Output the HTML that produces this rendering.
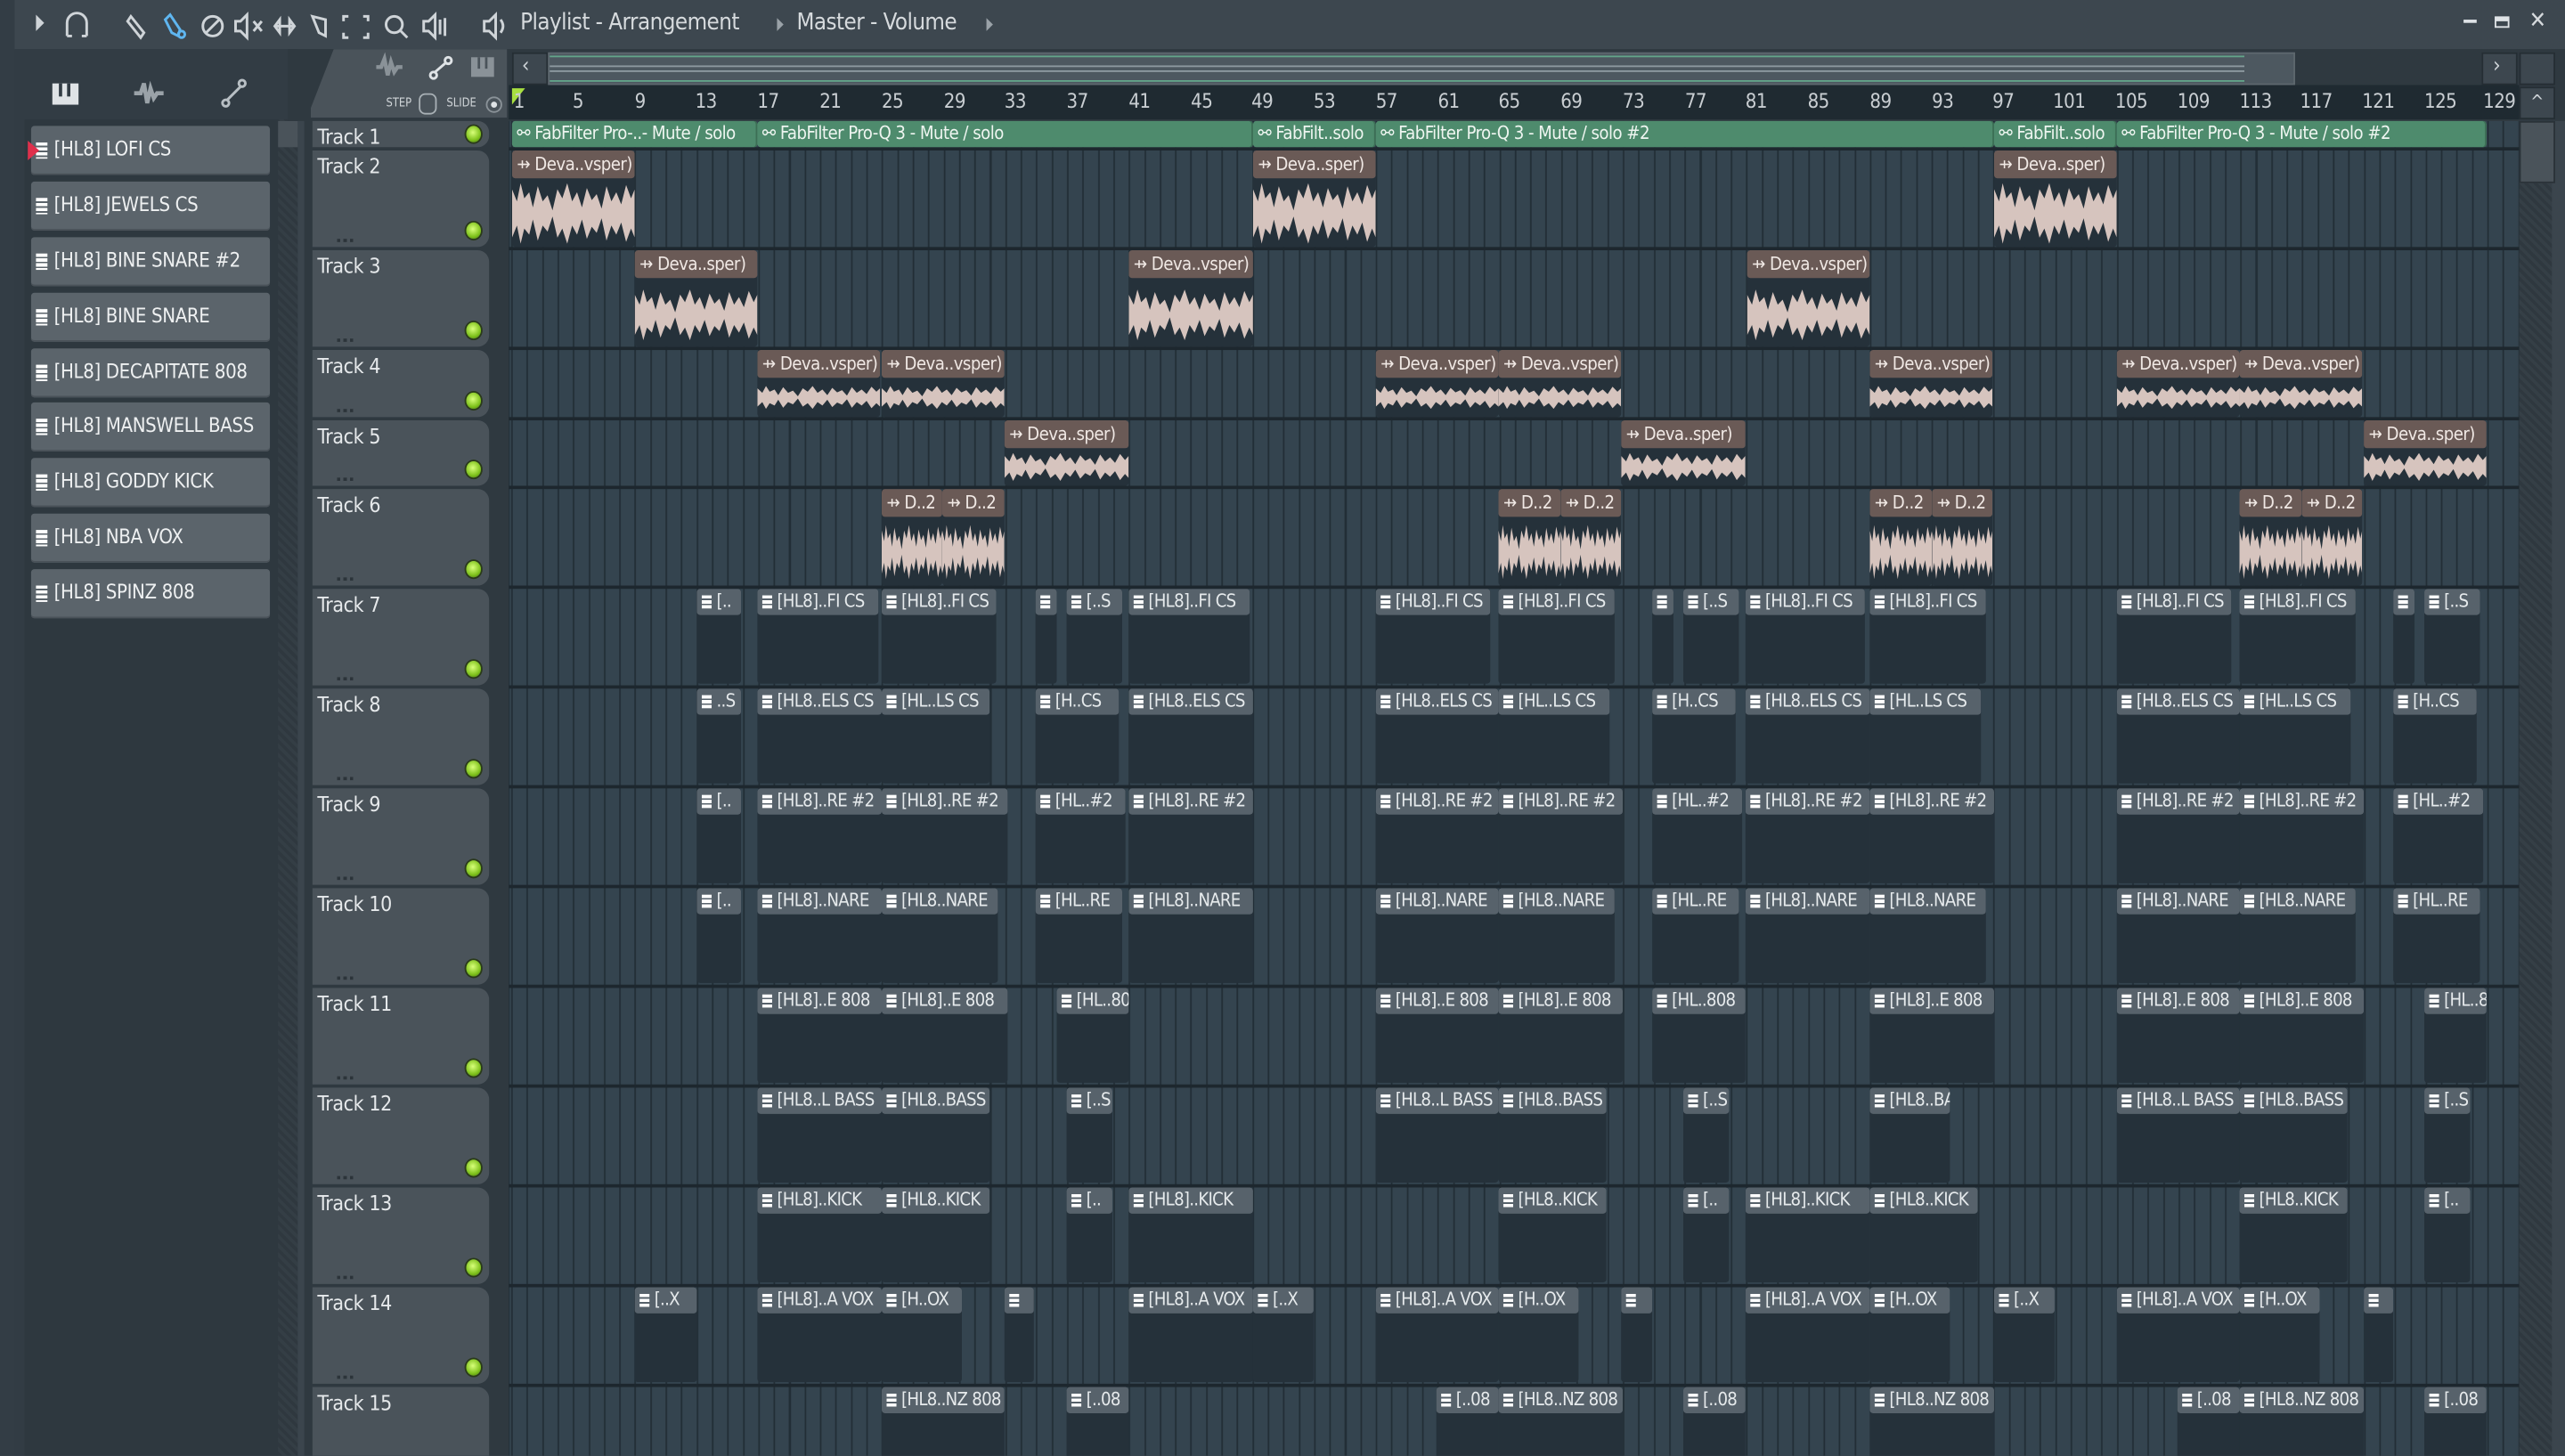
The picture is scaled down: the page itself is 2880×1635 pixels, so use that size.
<!DOCTYPE html>
<html><head><meta charset="utf-8"><style>
html,body{margin:0;padding:0;background:#3b454d;overflow:hidden;width:2880px;height:1634px}
#r{position:absolute;left:0;top:0;width:1568px;height:890px;overflow:hidden;transform:scale(1.836735);transform-origin:0 0;background:#3b454d;font-family:"DejaVu Sans Condensed","DejaVu Sans","Liberation Sans",sans-serif;color:#dfe3e6}
.ab{position:absolute}
#top{left:0;top:0;width:1568px;height:30px;background:#3d474f}
.tt{position:absolute;top:6px;font-size:14px;color:#d6dadd;letter-spacing:-.3px}
#lp{left:9px;top:30px;width:173px;height:860px;background:#323c44}
.ch{position:absolute;left:19px;width:146px;height:30px;background:#5b646b;border-radius:2px;box-shadow:inset 0 -1px 0 #4a5259}
.ch span{position:absolute;left:14px;top:7px;font-size:12px;color:#eef0f1;white-space:nowrap;letter-spacing:-.2px}
.ch i{position:absolute;left:3px;top:10px;width:7px;height:10px;background:repeating-linear-gradient(#fff 0 2px,#5b646b 2px 3px)}
#hdrcol{left:186px;top:74px;width:125px;height:816px;background:#2f3940}
.th{position:absolute;left:191px;width:108px;background:#4a535a;border-radius:0 7px 7px 0}
.th span{position:absolute;left:3px;top:2px;font-size:12.5px;color:#e6e9eb;letter-spacing:-.2px}
.th i{position:absolute;right:5px;bottom:5px;width:9px;height:10px;border-radius:50%;background:radial-gradient(circle at 45% 40%,#d8ff7a,#7fc21c 60%,#3f6a10);box-shadow:0 0 0 1px #2a3a1a}
.th u{position:absolute;left:15px;bottom:3px;width:10px;height:2px;background:repeating-linear-gradient(90deg,#2c343a 0 2px,transparent 2px 4px)}
#grid{left:311px;top:74px;width:1229px;height:816px;background-color:#34444f;background-image:repeating-linear-gradient(90deg,#222e36 0 1px,transparent 1px 9.4375px);background-position:1.5px 0}
.sep{position:absolute;left:311px;width:1229px;height:2px;background:#1d272e}
#ruler{left:311px;top:52px;width:1229px;height:21px;background:#1f2a31}
.rn{position:absolute;top:55px;font-size:12px;color:#c9ced2;letter-spacing:-.3px}
.p{position:absolute;height:58px;background:#25313a;border-radius:2px;overflow:hidden}
.p b{display:block;height:16px;background:#57626b;border-radius:2px;font-weight:normal;font-size:11px;letter-spacing:-.4px;line-height:16px;white-space:nowrap;overflow:hidden;color:#e6eaec;padding-left:12px;position:relative}
.p b:before{content:"";position:absolute;left:3px;top:4px;width:6px;height:8px;background:repeating-linear-gradient(#fff 0 2px,#57626b 2px 3px)}
.a{position:absolute;background:#25313a;border-radius:2px;overflow:hidden}
.a b{display:block;height:17px;background:#6a5a56;border-radius:2px;font-weight:normal;font-size:11px;letter-spacing:-.3px;line-height:17px;white-space:nowrap;overflow:hidden;color:#f0e8e4;padding-left:3px}
.a em{position:absolute;left:0;right:0;background:#d6c4be;clip-path:polygon(0 10%,4% 30%,7% 0,10% 25%,14% 15%,17% 40%,21% 5%,25% 30%,29% 20%,33% 45%,37% 10%,41% 25%,45% 0,49% 30%,53% 15%,57% 40%,61% 8%,65% 28%,69% 18%,73% 42%,77% 5%,81% 30%,85% 15%,89% 35%,93% 3%,97% 25%,100% 10%,100% 90%,97% 75%,93% 97%,89% 65%,85% 85%,81% 70%,77% 95%,73% 58%,69% 82%,65% 72%,61% 92%,57% 60%,53% 85%,49% 70%,45% 100%,41% 75%,37% 90%,33% 55%,29% 80%,25% 70%,21% 95%,17% 60%,14% 85%,10% 75%,7% 100%,4% 70%,0 90%)}
.au{position:absolute;top:74px;height:16px;background:#4e8b6d;border-radius:2px;font-size:11px;letter-spacing:-.3px;line-height:16px;color:#eef5f0;white-space:nowrap;overflow:hidden;padding-left:3px;box-shadow:inset -1px 0 0 #3c6e55}
</style></head><body><div id="r">
<div class="ab" id="top"></div>
<div class="ab" style="left:0;top:0;width:9px;height:890px;background:#333d45"></div>
<div class="ab" style="left:22px;top:9px;width:0;height:0;border-left:5px solid #cfd4d8;border-top:5px solid transparent;border-bottom:5px solid transparent"></div>
<svg class="ab" style="left:38px;top:6px" width="240" height="20" viewBox="0 0 240 20" fill="none" stroke="#cfd4d8" stroke-width="1.6">
<path d="M3 16V8a6 6 0 0 1 12 0v8M3 16h3M12 16h3"/>
<path d="M42 4l8 10-2 3-8-10z"/>
<path d="M66 3l6 9-1 4-4-2-4-8z" stroke="#5fb6f0"/><circle cx="73" cy="15" r="2" stroke="#5fb6f0"/>
<circle cx="92" cy="10" r="6"/><path d="M88 14l8-8"/>
<path d="M106 7h3l4-4v14l-4-4h-3zM117 7l5 6M122 7l-5 6"/>
<path d="M130 10h12M130 10l3-4v8zM142 10l-3-4v8z"/>
<path d="M153 4l8 2v10l-4-2z"/>
<path d="M175 4h-3v3M184 4h3v3M175 17h-3v-3M184 17h3v-3"/>
<circle cx="203" cy="9" r="5"/><path d="M207 13l4 4"/>
<path d="M221 7h3l4-4v14l-4-4h-3zM231 6v9M234 5v11"/>
</svg>
<svg class="ab" style="left:293px;top:6px" width="20" height="20" viewBox="0 0 20 20" fill="none" stroke="#cfd4d8" stroke-width="1.6"><path d="M3 7h3l4-4v14l-4-4H3zM13 6q3 4 0 8"/></svg>
<div class="tt" style="left:318px">Playlist - Arrangement</div>
<div class="ab" style="left:475px;top:11px;border-left:4px solid #9aa2a8;border-top:4px solid transparent;border-bottom:4px solid transparent"></div>
<div class="tt" style="left:487px">Master - Volume</div>
<div class="ab" style="left:603px;top:11px;border-left:4px solid #9aa2a8;border-top:4px solid transparent;border-bottom:4px solid transparent"></div>
<div class="ab" style="left:1506px;top:12px;width:8px;height:2px;background:#dfe3e6"></div>
<div class="ab" style="left:1525px;top:10px;width:9px;height:7px;border:1.5px solid #dfe3e6;border-top-width:3px;box-sizing:border-box"></div>
<div class="tt" style="left:1546px;top:5px;font-size:14px">✕</div>

<div class="ab" id="lp"></div>
<svg class="ab" style="left:30px;top:46px" width="130" height="22" viewBox="0 0 130 22" fill="#dfe3e6" stroke="#b8bfc4" stroke-width="1.6">
<rect x="2" y="5" width="16" height="13" stroke="none"/><rect x="6" y="5" width="2" height="8" fill="#323c44" stroke="none"/><rect x="11" y="5" width="2" height="8" fill="#323c44" stroke="none"/>
<path d="M52 11h4l2-6 2 12 2-9 2 6 2-3h4" fill="none" stroke="#9aa2a8" stroke-width="2.5"/>
<circle cx="108" cy="17" r="2" fill="none"/><circle cx="118" cy="5" r="2" fill="none"/><path d="M109 15l8-8" fill="none"/>
</svg>
<div class="ab" style="left:15px;top:73px;width:155px;height:817px;background:#2e383f"></div>
<div class="ab" style="left:170px;top:73px;width:12px;height:817px;background:repeating-linear-gradient(45deg,#2f383f 0 2px,#343e45 2px 4px)"></div>
<div class="ab" style="left:170px;top:74px;width:12px;height:16px;background:#4a535a"></div>
<div class="ch" style="top:77px"><i></i><span>[HL8] LOFI CS</span></div>
<div class="ab" style="left:17px;top:86px;border-left:7px solid #e0304c;border-top:6px solid transparent;border-bottom:6px solid transparent"></div>
<div class="ch" style="top:111px"><i></i><span>[HL8] JEWELS CS</span></div>
<div class="ch" style="top:145px"><i></i><span>[HL8] BINE SNARE #2</span></div>
<div class="ch" style="top:179px"><i></i><span>[HL8] BINE SNARE</span></div>
<div class="ch" style="top:213px"><i></i><span>[HL8] DECAPITATE 808</span></div>
<div class="ch" style="top:246px"><i></i><span>[HL8] MANSWELL BASS</span></div>
<div class="ch" style="top:280px"><i></i><span>[HL8] GODDY KICK</span></div>
<div class="ch" style="top:314px"><i></i><span>[HL8] NBA VOX</span></div>
<div class="ch" style="top:348px"><i></i><span>[HL8] SPINZ 808</span></div>

<div class="ab" style="left:176px;top:30px;width:1392px;height:44px;background:#2f3940"></div>
<div class="ab" style="left:190px;top:30px;width:120px;height:42px;background:#4a535a;clip-path:polygon(14px 0,120px 0,120px 42px,0 42px,0 36px)"></div>
<svg class="ab" style="left:228px;top:32px" width="80" height="18" viewBox="0 0 80 18" fill="none" stroke-width="1.6">
<path d="M2 9h3l2-5 2 10 2-8 2 6 2-3h3" stroke="#8a9298" stroke-width="2.4"/>
<circle cx="37" cy="14" r="2" stroke="#dfe3e6"/><circle cx="46" cy="5" r="2" stroke="#dfe3e6"/><path d="M38 12l7-6" stroke="#dfe3e6"/>
<rect x="60" y="3" width="14" height="12" fill="#8a9298" stroke="none"/><rect x="64" y="3" width="1.5" height="7" fill="#4a535a"/><rect x="68.5" y="3" width="1.5" height="7" fill="#4a535a"/>
</svg>
<div class="ab" style="left:236px;top:59px;font-size:7px;color:#d0d5d8">STEP</div>
<div class="ab" style="left:256px;top:57px;width:9px;height:11px;border:1px solid #a8b0b5;border-radius:4px"></div>
<div class="ab" style="left:273px;top:59px;font-size:7px;color:#d0d5d8">SLIDE</div>
<div class="ab" style="left:297px;top:59px;width:8px;height:8px;border:1px solid #8a9298;border-radius:50%;background:radial-gradient(#dfe3e6 30%,transparent 35%)"></div>
<div class="ab" style="left:313px;top:32px;width:20px;height:18px;background:#3d474f;border:1px solid #252e34"></div>
<div class="ab" style="left:319px;top:33px;font-size:13px;color:#cfd4d8">&lsaquo;</div>
<div class="ab" style="left:335px;top:32px;width:1066px;height:18px;background:#4d5860;border:1px solid #5d676e;background-image:linear-gradient(#63a58a,#63a58a),linear-gradient(#8d9aa1,#8d9aa1),linear-gradient(#8d9aa1,#8d9aa1),linear-gradient(#63a58a,#63a58a);background-size:1036px 1px,1036px 1px,1036px 1px,1036px 1px;background-position:0 1px,0 7px,0 10px,0 16px;background-repeat:no-repeat"></div>
<div class="ab" style="left:1517px;top:32px;width:20px;height:18px;background:#3d474f;border:1px solid #252e34"></div>
<div class="ab" style="left:1524px;top:33px;font-size:13px;color:#cfd4d8">&rsaquo;</div>
<div class="ab" style="left:1540px;top:32px;width:20px;height:18px;background:#3d474f;border:1px solid #252e34"></div>
<div class="ab" id="ruler"></div>
<div class="ab" style="left:313px;top:54px;width:0;height:0;border-left:8px solid #a8e040;border-bottom:10px solid transparent"></div>
<div class="rn" style="left:314px">1</div><div class="rn" style="left:350px">5</div><div class="rn" style="left:388px">9</div><div class="rn" style="left:425px">13</div><div class="rn" style="left:463px">17</div><div class="rn" style="left:501px">21</div><div class="rn" style="left:539px">25</div><div class="rn" style="left:577px">29</div><div class="rn" style="left:614px">33</div><div class="rn" style="left:652px">37</div><div class="rn" style="left:690px">41</div><div class="rn" style="left:728px">45</div><div class="rn" style="left:765px">49</div><div class="rn" style="left:803px">53</div><div class="rn" style="left:841px">57</div><div class="rn" style="left:879px">61</div><div class="rn" style="left:916px">65</div><div class="rn" style="left:954px">69</div><div class="rn" style="left:992px">73</div><div class="rn" style="left:1030px">77</div><div class="rn" style="left:1067px">81</div><div class="rn" style="left:1105px">85</div><div class="rn" style="left:1143px">89</div><div class="rn" style="left:1181px">93</div><div class="rn" style="left:1218px">97</div><div class="rn" style="left:1255px">101</div><div class="rn" style="left:1293px">105</div><div class="rn" style="left:1331px">109</div><div class="rn" style="left:1369px">113</div><div class="rn" style="left:1406px">117</div><div class="rn" style="left:1444px">121</div><div class="rn" style="left:1482px">125</div><div class="rn" style="left:1518px">129</div>
<div class="ab" style="left:1540px;top:53px;width:20px;height:18px;background:#3d474f;border:1px solid #252e34;font-size:11px;color:#cfd4d8;text-align:center;line-height:18px">^</div>
<div class="ab" style="left:1540px;top:74px;width:20px;height:816px;background:repeating-linear-gradient(45deg,#2f383f 0 2px,#353f46 2px 4px)"></div>
<div class="ab" style="left:1540px;top:74px;width:20px;height:36px;background:#4a535a;border:1px solid #2a3238"></div>

<div class="ab" id="hdrcol"></div>
<div class="th" style="top:74px;height:16px"><span>Track 1</span><i style="bottom:3px"></i></div>
<div class="th" style="top:92px;height:59px"><span>Track 2</span><i></i><u></u></div>
<div class="th" style="top:153px;height:59px"><span>Track 3</span><i></i><u></u></div>
<div class="th" style="top:214px;height:41px"><span>Track 4</span><i></i><u></u></div>
<div class="th" style="top:257px;height:40px"><span>Track 5</span><i></i><u></u></div>
<div class="th" style="top:299px;height:59px"><span>Track 6</span><i></i><u></u></div>
<div class="th" style="top:360px;height:59px"><span>Track 7</span><i></i><u></u></div>
<div class="th" style="top:421px;height:59px"><span>Track 8</span><i></i><u></u></div>
<div class="th" style="top:482px;height:59px"><span>Track 9</span><i></i><u></u></div>
<div class="th" style="top:543px;height:59px"><span>Track 10</span><i></i><u></u></div>
<div class="th" style="top:604px;height:59px"><span>Track 11</span><i></i><u></u></div>
<div class="th" style="top:665px;height:59px"><span>Track 12</span><i></i><u></u></div>
<div class="th" style="top:726px;height:59px"><span>Track 13</span><i></i><u></u></div>
<div class="th" style="top:787px;height:59px"><span>Track 14</span><i></i><u></u></div>
<div class="th" style="top:848px;height:59px"><span>Track 15</span></div>

<div class="ab" id="grid"></div>
<div class="sep" style="top:90px"></div><div class="sep" style="top:151px"></div><div class="sep" style="top:212px"></div><div class="sep" style="top:255px"></div><div class="sep" style="top:297px"></div><div class="sep" style="top:358px"></div><div class="sep" style="top:419px"></div><div class="sep" style="top:480px"></div><div class="sep" style="top:541px"></div><div class="sep" style="top:602px"></div><div class="sep" style="top:663px"></div><div class="sep" style="top:724px"></div><div class="sep" style="top:785px"></div><div class="sep" style="top:846px"></div>

<div class="au" style="left:313px;width:147px">⚯ FabFilter Pro-..- Mute / solo</div>
<div class="au" style="left:463px;width:300px">⚯ FabFilter Pro-Q 3 - Mute / solo</div>
<div class="au" style="left:766px;width:72px">⚯ FabFilt..solo</div>
<div class="au" style="left:841px;width:375px">⚯ FabFilter Pro-Q 3 - Mute / solo #2</div>
<div class="au" style="left:1219px;width:72px">⚯ FabFilt..solo</div>
<div class="au" style="left:1294px;width:223px">⚯ FabFilter Pro-Q 3 - Mute / solo #2</div>

<div class="a" style="left:313px;top:92px;width:75px;height:59px"><b>⇸ Deva..vsper)</b><em style="top:20px;bottom:2px"></em></div>
<div class="a" style="left:766px;top:92px;width:75px;height:59px"><b>⇸ Deva..sper)</b><em style="top:20px;bottom:2px"></em></div>
<div class="a" style="left:1219px;top:92px;width:75px;height:59px"><b>⇸ Deva..sper)</b><em style="top:20px;bottom:2px"></em></div>
<div class="a" style="left:388px;top:153px;width:75px;height:59px"><b>⇸ Deva..sper)</b><em style="top:24px;bottom:4px"></em></div>
<div class="a" style="left:690px;top:153px;width:76px;height:59px"><b>⇸ Deva..vsper)</b><em style="top:24px;bottom:4px"></em></div>
<div class="a" style="left:1068px;top:153px;width:75px;height:59px"><b>⇸ Deva..vsper)</b><em style="top:24px;bottom:4px"></em></div>
<div class="a" style="left:463px;top:214px;width:75px;height:41px"><b>⇸ Deva..vsper)</b><em style="top:22px;bottom:5px"></em></div>
<div class="a" style="left:539px;top:214px;width:75px;height:41px"><b>⇸ Deva..vsper)</b><em style="top:22px;bottom:5px"></em></div>
<div class="a" style="left:841px;top:214px;width:75px;height:41px"><b>⇸ Deva..vsper)</b><em style="top:22px;bottom:5px"></em></div>
<div class="a" style="left:916px;top:214px;width:75px;height:41px"><b>⇸ Deva..vsper)</b><em style="top:22px;bottom:5px"></em></div>
<div class="a" style="left:1143px;top:214px;width:75px;height:41px"><b>⇸ Deva..vsper)</b><em style="top:22px;bottom:5px"></em></div>
<div class="a" style="left:1294px;top:214px;width:75px;height:41px"><b>⇸ Deva..vsper)</b><em style="top:22px;bottom:5px"></em></div>
<div class="a" style="left:1369px;top:214px;width:75px;height:41px"><b>⇸ Deva..vsper)</b><em style="top:22px;bottom:5px"></em></div>
<div class="a" style="left:614px;top:257px;width:76px;height:40px"><b>⇸ Deva..sper)</b><em style="top:20px;bottom:3px"></em></div>
<div class="a" style="left:991px;top:257px;width:76px;height:40px"><b>⇸ Deva..sper)</b><em style="top:20px;bottom:3px"></em></div>
<div class="a" style="left:1445px;top:257px;width:75px;height:40px"><b>⇸ Deva..sper)</b><em style="top:20px;bottom:3px"></em></div>
<div class="a" style="left:539px;top:299px;width:37px;height:59px"><b>⇸ D..2</b><em style="top:22px;bottom:4px"></em></div>
<div class="a" style="left:576px;top:299px;width:38px;height:59px"><b>⇸ D..2</b><em style="top:22px;bottom:4px"></em></div>
<div class="a" style="left:916px;top:299px;width:38px;height:59px"><b>⇸ D..2</b><em style="top:22px;bottom:4px"></em></div>
<div class="a" style="left:954px;top:299px;width:37px;height:59px"><b>⇸ D..2</b><em style="top:22px;bottom:4px"></em></div>
<div class="a" style="left:1143px;top:299px;width:38px;height:59px"><b>⇸ D..2</b><em style="top:22px;bottom:4px"></em></div>
<div class="a" style="left:1181px;top:299px;width:37px;height:59px"><b>⇸ D..2</b><em style="top:22px;bottom:4px"></em></div>
<div class="a" style="left:1369px;top:299px;width:38px;height:59px"><b>⇸ D..2</b><em style="top:22px;bottom:4px"></em></div>
<div class="a" style="left:1407px;top:299px;width:37px;height:59px"><b>⇸ D..2</b><em style="top:22px;bottom:4px"></em></div>

<div class="p" style="left:426px;top:360px;width:27px"><b>[..</b></div>
<div class="p" style="left:463px;top:360px;width:74px"><b>[HL8]..FI CS</b></div>
<div class="p" style="left:539px;top:360px;width:70px"><b>[HL8]..FI CS</b></div>
<div class="p" style="left:633px;top:360px;width:13px"><b></b></div>
<div class="p" style="left:652px;top:360px;width:34px"><b>[..S</b></div>
<div class="p" style="left:690px;top:360px;width:74px"><b>[HL8]..FI CS</b></div>
<div class="p" style="left:841px;top:360px;width:70px"><b>[HL8]..FI CS</b></div>
<div class="p" style="left:916px;top:360px;width:71px"><b>[HL8]..FI CS</b></div>
<div class="p" style="left:1010px;top:360px;width:13px"><b></b></div>
<div class="p" style="left:1029px;top:360px;width:34px"><b>[..S</b></div>
<div class="p" style="left:1067px;top:360px;width:73px"><b>[HL8]..FI CS</b></div>
<div class="p" style="left:1143px;top:360px;width:71px"><b>[HL8]..FI CS</b></div>
<div class="p" style="left:1294px;top:360px;width:70px"><b>[HL8]..FI CS</b></div>
<div class="p" style="left:1369px;top:360px;width:71px"><b>[HL8]..FI CS</b></div>
<div class="p" style="left:1463px;top:360px;width:13px"><b></b></div>
<div class="p" style="left:1482px;top:360px;width:34px"><b>[..S</b></div>
<div class="p" style="left:426px;top:421px;width:27px"><b>..S</b></div>
<div class="p" style="left:463px;top:421px;width:76px"><b>[HL8..ELS CS</b></div>
<div class="p" style="left:539px;top:421px;width:66px"><b>[HL..LS CS</b></div>
<div class="p" style="left:633px;top:421px;width:51px"><b>[H..CS</b></div>
<div class="p" style="left:690px;top:421px;width:76px"><b>[HL8..ELS CS</b></div>
<div class="p" style="left:841px;top:421px;width:75px"><b>[HL8..ELS CS</b></div>
<div class="p" style="left:916px;top:421px;width:68px"><b>[HL..LS CS</b></div>
<div class="p" style="left:1010px;top:421px;width:51px"><b>[H..CS</b></div>
<div class="p" style="left:1067px;top:421px;width:76px"><b>[HL8..ELS CS</b></div>
<div class="p" style="left:1143px;top:421px;width:68px"><b>[HL..LS CS</b></div>
<div class="p" style="left:1294px;top:421px;width:75px"><b>[HL8..ELS CS</b></div>
<div class="p" style="left:1369px;top:421px;width:68px"><b>[HL..LS CS</b></div>
<div class="p" style="left:1463px;top:421px;width:51px"><b>[H..CS</b></div>
<div class="p" style="left:426px;top:482px;width:27px"><b>[..</b></div>
<div class="p" style="left:463px;top:482px;width:76px"><b>[HL8]..RE #2</b></div>
<div class="p" style="left:539px;top:482px;width:77px"><b>[HL8]..RE #2</b></div>
<div class="p" style="left:633px;top:482px;width:55px"><b>[HL..#2</b></div>
<div class="p" style="left:690px;top:482px;width:76px"><b>[HL8]..RE #2</b></div>
<div class="p" style="left:841px;top:482px;width:75px"><b>[HL8]..RE #2</b></div>
<div class="p" style="left:916px;top:482px;width:76px"><b>[HL8]..RE #2</b></div>
<div class="p" style="left:1010px;top:482px;width:55px"><b>[HL..#2</b></div>
<div class="p" style="left:1067px;top:482px;width:76px"><b>[HL8]..RE #2</b></div>
<div class="p" style="left:1143px;top:482px;width:76px"><b>[HL8]..RE #2</b></div>
<div class="p" style="left:1294px;top:482px;width:75px"><b>[HL8]..RE #2</b></div>
<div class="p" style="left:1369px;top:482px;width:76px"><b>[HL8]..RE #2</b></div>
<div class="p" style="left:1463px;top:482px;width:55px"><b>[HL..#2</b></div>
<div class="p" style="left:426px;top:543px;width:27px"><b>[..</b></div>
<div class="p" style="left:463px;top:543px;width:76px"><b>[HL8]..NARE</b></div>
<div class="p" style="left:539px;top:543px;width:71px"><b>[HL8..NARE</b></div>
<div class="p" style="left:633px;top:543px;width:53px"><b>[HL..RE</b></div>
<div class="p" style="left:690px;top:543px;width:76px"><b>[HL8]..NARE</b></div>
<div class="p" style="left:841px;top:543px;width:75px"><b>[HL8]..NARE</b></div>
<div class="p" style="left:916px;top:543px;width:71px"><b>[HL8..NARE</b></div>
<div class="p" style="left:1010px;top:543px;width:53px"><b>[HL..RE</b></div>
<div class="p" style="left:1067px;top:543px;width:76px"><b>[HL8]..NARE</b></div>
<div class="p" style="left:1143px;top:543px;width:71px"><b>[HL8..NARE</b></div>
<div class="p" style="left:1294px;top:543px;width:75px"><b>[HL8]..NARE</b></div>
<div class="p" style="left:1369px;top:543px;width:71px"><b>[HL8..NARE</b></div>
<div class="p" style="left:1463px;top:543px;width:53px"><b>[HL..RE</b></div>
<div class="p" style="left:463px;top:604px;width:76px"><b>[HL8]..E 808</b></div>
<div class="p" style="left:539px;top:604px;width:77px"><b>[HL8]..E 808</b></div>
<div class="p" style="left:646px;top:604px;width:44px"><b>[HL..808</b></div>
<div class="p" style="left:841px;top:604px;width:75px"><b>[HL8]..E 808</b></div>
<div class="p" style="left:916px;top:604px;width:76px"><b>[HL8]..E 808</b></div>
<div class="p" style="left:1010px;top:604px;width:57px"><b>[HL..808</b></div>
<div class="p" style="left:1143px;top:604px;width:76px"><b>[HL8]..E 808</b></div>
<div class="p" style="left:1294px;top:604px;width:75px"><b>[HL8]..E 808</b></div>
<div class="p" style="left:1369px;top:604px;width:76px"><b>[HL8]..E 808</b></div>
<div class="p" style="left:1482px;top:604px;width:38px"><b>[HL..808</b></div>
<div class="p" style="left:463px;top:665px;width:76px"><b>[HL8..L BASS</b></div>
<div class="p" style="left:539px;top:665px;width:66px"><b>[HL8..BASS</b></div>
<div class="p" style="left:652px;top:665px;width:28px"><b>[..S</b></div>
<div class="p" style="left:841px;top:665px;width:75px"><b>[HL8..L BASS</b></div>
<div class="p" style="left:916px;top:665px;width:66px"><b>[HL8..BASS</b></div>
<div class="p" style="left:1029px;top:665px;width:28px"><b>[..S</b></div>
<div class="p" style="left:1143px;top:665px;width:49px"><b>[HL8..BASS</b></div>
<div class="p" style="left:1294px;top:665px;width:75px"><b>[HL8..L BASS</b></div>
<div class="p" style="left:1369px;top:665px;width:66px"><b>[HL8..BASS</b></div>
<div class="p" style="left:1482px;top:665px;width:28px"><b>[..S</b></div>
<div class="p" style="left:463px;top:726px;width:76px"><b>[HL8]..KICK</b></div>
<div class="p" style="left:539px;top:726px;width:66px"><b>[HL8..KICK</b></div>
<div class="p" style="left:652px;top:726px;width:28px"><b>[..</b></div>
<div class="p" style="left:690px;top:726px;width:76px"><b>[HL8]..KICK</b></div>
<div class="p" style="left:916px;top:726px;width:66px"><b>[HL8..KICK</b></div>
<div class="p" style="left:1029px;top:726px;width:28px"><b>[..</b></div>
<div class="p" style="left:1067px;top:726px;width:76px"><b>[HL8]..KICK</b></div>
<div class="p" style="left:1143px;top:726px;width:66px"><b>[HL8..KICK</b></div>
<div class="p" style="left:1369px;top:726px;width:66px"><b>[HL8..KICK</b></div>
<div class="p" style="left:1482px;top:726px;width:28px"><b>[..</b></div>
<div class="p" style="left:388px;top:787px;width:38px"><b>[..X</b></div>
<div class="p" style="left:463px;top:787px;width:76px"><b>[HL8]..A VOX</b></div>
<div class="p" style="left:539px;top:787px;width:49px"><b>[H..OX</b></div>
<div class="p" style="left:614px;top:787px;width:18px"><b></b></div>
<div class="p" style="left:690px;top:787px;width:76px"><b>[HL8]..A VOX</b></div>
<div class="p" style="left:766px;top:787px;width:37px"><b>[..X</b></div>
<div class="p" style="left:841px;top:787px;width:75px"><b>[HL8]..A VOX</b></div>
<div class="p" style="left:916px;top:787px;width:49px"><b>[H..OX</b></div>
<div class="p" style="left:991px;top:787px;width:19px"><b></b></div>
<div class="p" style="left:1067px;top:787px;width:76px"><b>[HL8]..A VOX</b></div>
<div class="p" style="left:1143px;top:787px;width:49px"><b>[H..OX</b></div>
<div class="p" style="left:1219px;top:787px;width:37px"><b>[..X</b></div>
<div class="p" style="left:1294px;top:787px;width:75px"><b>[HL8]..A VOX</b></div>
<div class="p" style="left:1369px;top:787px;width:49px"><b>[H..OX</b></div>
<div class="p" style="left:1445px;top:787px;width:18px"><b></b></div>
<div class="p" style="left:539px;top:848px;width:75px"><b>[HL8..NZ 808</b></div>
<div class="p" style="left:652px;top:848px;width:38px"><b>[..08</b></div>
<div class="p" style="left:878px;top:848px;width:38px"><b>[..08</b></div>
<div class="p" style="left:916px;top:848px;width:76px"><b>[HL8..NZ 808</b></div>
<div class="p" style="left:1029px;top:848px;width:38px"><b>[..08</b></div>
<div class="p" style="left:1143px;top:848px;width:76px"><b>[HL8..NZ 808</b></div>
<div class="p" style="left:1331px;top:848px;width:38px"><b>[..08</b></div>
<div class="p" style="left:1369px;top:848px;width:76px"><b>[HL8..NZ 808</b></div>
<div class="p" style="left:1482px;top:848px;width:38px"><b>[..08</b></div>
</div></body></html>
